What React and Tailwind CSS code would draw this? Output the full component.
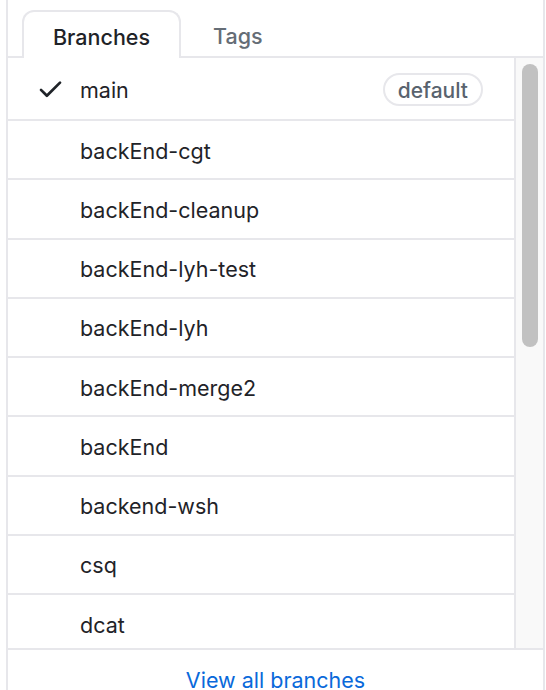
import React from 'react';

const branches = [
  'backEnd-cgt',
  'backEnd-cleanup',
  'backEnd-lyh-test',
  'backEnd-lyh',
  'backEnd-merge2',
  'backEnd',
  'backend-wsh',
  'csq',
  'dcat',
];

function CheckIcon() {
  return (
    <svg viewBox="0 0 16 16" className="w-[29px] h-[29px] fill-[#1f2328]">
      <path d="M13.78 4.22a.75.75 0 0 1 0 1.06l-7.25 7.25a.75.75 0 0 1-1.06 0L2.22 9.28a.751.751 0 0 1 .018-1.042.751.751 0 0 1 1.042-.018L6 10.94l6.72-6.72a.75.75 0 0 1 1.06 0Z" />
    </svg>
  );
}

export default function App() {
  return (
    <div className="w-[546px] h-[690px] overflow-hidden bg-white font-['Inter',sans-serif] text-[#1f2328]">
      <div className="ml-[6px] w-[539px] h-[760px] border-x-2 border-[#e7e7eb] flex flex-col">
        {/* tabs */}
        <div className="h-[58px] shrink-0 border-b-2 border-[#e7e7eb] flex items-end pl-[14px]">
          <div className="h-[48px] -mb-[2px] pt-[4px] px-[29px] bg-white border-2 border-b-0 border-[#e7e7eb] rounded-t-[12px] flex items-center text-[21.5px] font-medium">
            Branches
          </div>
          <div className="h-[48px] -mb-[2px] pt-[4px] px-[30px] border-2 border-transparent flex items-center text-[21.5px] font-medium text-[#656d76]">
            Tags
          </div>
        </div>

        {/* list + scrollbar */}
        <div className="h-[590px] shrink-0 flex">
          <div className="flex-1 overflow-hidden">
            <div className="h-[63px] pt-[4px] border-b-2 border-[#e7e7eb] flex items-center pl-[28px] pr-[31px]">
              <div className="w-[44px] -mt-[4px] flex items-center">
                <CheckIcon />
              </div>
              <span className="text-[21.5px]">main</span>
              <span className="ml-auto -mt-[2px] h-[33px] px-[13px] pt-[2px] rounded-full border-2 border-[#e7e7eb] flex items-center text-[21px] font-medium text-[#59636e]">
                default
              </span>
            </div>
            {branches.map((b) => (
              <div
                key={b}
                className="h-[59.25px] pt-[2px] border-b-2 border-[#e7e7eb] flex items-center pl-[72px] text-[21.5px]"
              >
                {b}
              </div>
            ))}
          </div>
          <div className="w-[29px] shrink-0 border-l-2 border-[#e7e7eb] bg-[#f9f9f9] pt-[6px] pl-[6px]">
            <div className="w-[16px] h-[283px] rounded-full bg-[#c1c1c1]" />
          </div>
        </div>

        {/* footer */}
        <div className="border-t-2 border-[#e7e7eb] pt-[14px] text-center text-[21.5px] text-[#0969da]">
          View all branches
        </div>
      </div>
    </div>
  );
}
